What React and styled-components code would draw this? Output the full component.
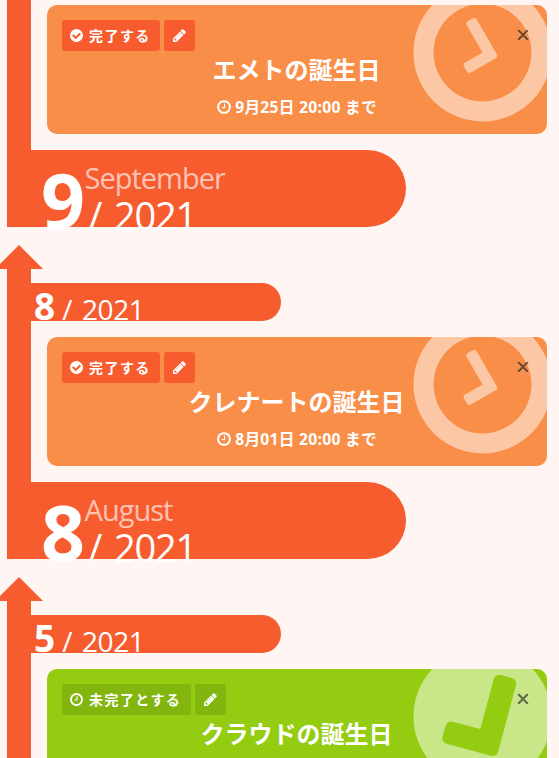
import React from "react";
import styled, { createGlobalStyle } from "styled-components";

const GlobalStyle = createGlobalStyle`
  * {
    box-sizing: border-box;
  }

  body {
    margin: 0;
    background: #fff5f2;
    font-family: "Noto Sans", "Noto Sans CJK JP", sans-serif;
  }
`;

const Page = styled.main`
  height: 758px;
  padding-left: 7px;
  overflow: hidden;
`;

const Month = styled.section`
  display: flex;
  margin-bottom: 18px;
`;

const Spine = styled.div`
  display: flex;
  flex-direction: column;
  align-items: center;
  flex: 0 0 24px;
  width: 24px;
  min-width: 0;
`;

const ArrowHead = styled.div`
  width: 48px;
  height: 24px;
  background: #f75c2f;
  clip-path: polygon(50% 0, 100% 100%, 0 100%);
`;

const ArrowBody = styled.div`
  flex: 1;
  width: 24px;
  background: #f75c2f;
`;

const Content = styled.div`
  padding-top: ${(props) => (props.$open ? "5px" : "38px")};
`;

const StartBar = styled.div`
  display: flex;
  align-items: baseline;
  width: 250px;
  height: 38px;
  margin-bottom: 16px;
  padding-left: 3px;
  border-radius: 0 19px 19px 0;
  background: #f75c2f;
  color: white;
  line-height: 45px;
`;

const StartNumber = styled.span`
  font-size: 37px;
  font-weight: bold;
`;

const StartYear = styled.span`
  margin-left: 7px;
  font-family: "Open Sans", sans-serif;
  font-size: 28px;
  letter-spacing: -0.4px;
  word-spacing: 3px;
`;

const EndBar = styled.div`
  display: flex;
  align-items: flex-start;
  width: 375px;
  height: 77px;
  padding-left: 10px;
  border-radius: 0 39px 39px 0;
  background: #f75c2f;
  color: white;
`;

const EndNumber = styled.span`
  font-size: 77px;
  font-weight: bold;
  line-height: 99px;
  letter-spacing: -0.5px;
`;

const EndText = styled.div`
  display: flex;
  flex-direction: column;
`;

const MonthName = styled.span`
  color: rgba(255, 255, 255, 0.65);
  font-family: "Open Sans", sans-serif;
  font-size: 29px;
  line-height: 55px;
  letter-spacing: -1px;
`;

const EndYear = styled.span`
  padding-left: 4px;
  font-family: "Open Sans", sans-serif;
  font-size: 38px;
  line-height: 20px;
  letter-spacing: -1.2px;
  word-spacing: 4px;
`;

const Card = styled.article`
  position: relative;
  width: 500px;
  height: 129px;
  margin: 0 0 16px 16px;
  padding: 15px;
  border-radius: 10px;
  overflow: hidden;
  background: ${(props) => (props.$done ? "#93cc11" : "#f98e48")};
  color: white;
  text-align: center;
`;

const BigIcon = styled.div`
  position: absolute;
  top: -33px;
  right: -16px;
  height: 161px;
  color: rgba(255, 255, 255, 0.5);
  transform: rotate(-30deg);
`;

const Buttons = styled.div`
  display: flex;
  gap: 4px;
`;

const Button = styled.button`
  display: flex;
  align-items: center;
  height: 31px;
  padding: 0 8px 0 7px;
  border: 0;
  border-radius: 3px;
  background: ${(props) => (props.$done ? "#83b50f" : "#f75c2f")};
  color: white;
  font: bold 14px "Noto Sans CJK JP", sans-serif;
  letter-spacing: 1.45px;

  svg {
    width: 15px;
    height: 15px;
  }

  span {
    margin: -2px 1.4px 0 5px;
  }
`;

const EditButton = styled(Button)`
  padding: 0 8px;
`;

const CloseButton = styled.button`
  position: absolute;
  top: 24px;
  right: 18px;
  display: flex;
  padding: 0;
  border: 0;
  background: none;
  color: rgba(0, 0, 0, 0.55);
  filter: drop-shadow(0 1px 0 rgba(255, 255, 255, 0.45));
`;

const Title = styled.h2`
  margin: 0;
  padding-right: 1px;
  font-size: 24px;
  line-height: 38px;
`;

const Deadline = styled.p`
  display: flex;
  align-items: center;
  justify-content: center;
  gap: 3px;
  margin: 5px 0 0;
  padding-right: 1px;
  font-family: "Open Sans", "Noto Sans CJK JP", sans-serif;
  font-size: 15.7px;
  font-weight: bold;
  line-height: 26px;
  letter-spacing: 0.25px;
`;

const paths = {
  clock:
    "M1024 544v448q0 14-9 23t-23 9h-320q-14 0-23-9t-9-23v-64q0-14 9-23t23-9h224v-352q0-14 9-23t23-9h64q14 0 23 9t9 23zm416 352q0-148-73-273t-198-198-273-73-273 73-198 198-73 273 73 273 198 198 273 73 273-73 198-198 73-273zm224 0q0 209-103 385.5t-279.5 279.5-385.5 103-385.5-103-279.5-279.5-103-385.5 103-385.5 279.5-279.5 385.5-103 385.5 103 279.5 279.5 103 385.5z",
  check:
    "M1412 734q0-28-18-46l-91-90q-19-19-45-19t-45 19l-408 407-226-226q-19-19-45-19t-45 19l-91 90q-18 18-18 46 0 27 18 45l362 362q19 19 45 19 27 0 46-19l543-543q18-18 18-45zm252 162q0 209-103 385.5t-279.5 279.5-385.5 103-385.5-103-279.5-279.5-103-385.5 103-385.5 279.5-279.5 385.5-103 385.5 103 279.5 279.5 103 385.5z",
  pencil:
    "M491 1536l91-91-235-235-91 91v107h128v128h107zm523-928q0-22-22-22-10 0-17 7l-542 542q-7 7-7 17 0 22 22 22 10 0 17-7l542-542q7-7 7-17zm-54-192l416 416-832 832h-416v-416zm683 96q0 53-37 90l-166 166-416-416 166-165q36-38 90-38 53 0 91 38l235 234q37 39 37 91z",
};

function Icon({ name, size }) {
  return (
    <svg width={size} height={size} viewBox="0 0 1792 1792" fill="currentColor">
      <path d={paths[name]} />
    </svg>
  );
}

function Event({ title, deadline, done }) {
  return (
    <Card $done={done}>
      <BigIcon>
        <Icon name={done ? "check" : "clock"} size={161} />
      </BigIcon>
      <Buttons>
        <Button $done={done}>
          <Icon name={done ? "clock" : "check"} size={15} />
          <span>{done ? "未完了とする" : "完了する"}</span>
        </Button>
        <EditButton $done={done} aria-label="編集">
          <Icon name="pencil" size={15} />
        </EditButton>
      </Buttons>
      <CloseButton aria-label="閉じる">
        <svg width="12" height="12" viewBox="0 0 12 12" stroke="currentColor">
          <path d="M1.8 1.8 10.2 10.2M10.2 1.8 1.8 10.2" strokeWidth="2.2" strokeLinecap="round" />
        </svg>
      </CloseButton>
      <Title>{title}</Title>
      <Deadline>
        <Icon name="clock" size={16} />
        {deadline} まで
      </Deadline>
    </Card>
  );
}

function MonthBlock({ number, name, open, ...event }) {
  return (
    <Month>
      <Spine>
        {!open && <ArrowHead />}
        <ArrowBody />
      </Spine>
      <Content $open={open}>
        {!open && (
          <StartBar>
            <StartNumber>{number}</StartNumber>
            <StartYear>/ 2021</StartYear>
          </StartBar>
        )}
        <Event {...event} />
        <EndBar>
          <EndNumber>{number}</EndNumber>
          <EndText>
            <MonthName>{name}</MonthName>
            <EndYear>/ 2021</EndYear>
          </EndText>
        </EndBar>
      </Content>
    </Month>
  );
}

function App() {
  return (
    <Page>
      <GlobalStyle />
      <MonthBlock number={9} name="September" title="エメトの誕生日" deadline="9月25日 20:00" open />
      <MonthBlock number={8} name="August" title="クレナートの誕生日" deadline="8月01日 20:00" />
      <MonthBlock number={5} name="May" title="クラウドの誕生日" deadline="5月01日 20:00" done />
    </Page>
  );
}

export default App;
